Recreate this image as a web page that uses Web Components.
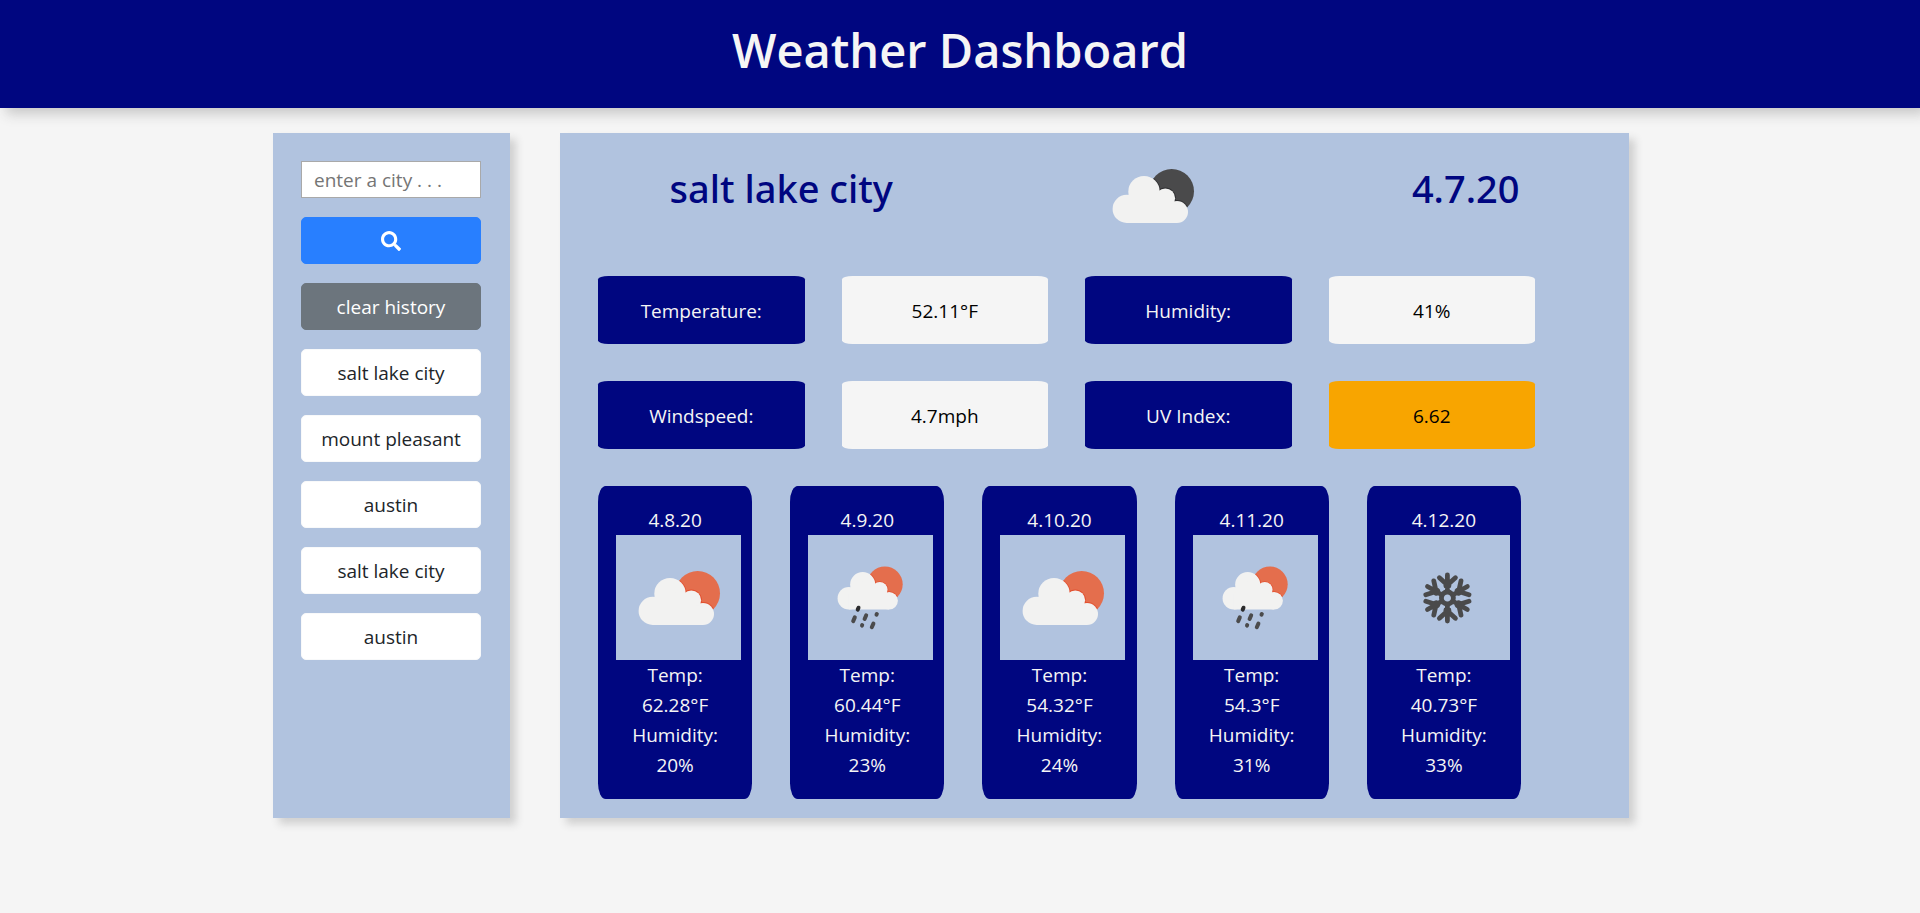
<!DOCTYPE html>
<html lang="en">
<head>
<meta charset="utf-8">
<meta name="viewport" content="width=device-width, initial-scale=1">
<title>Weather Dashboard</title>
<style>
  body {
    margin: 0;
    background: #f5f5f5;
    color: #000;
    font: 19px/30px "Open Sans", "Noto Sans", sans-serif;
  }
</style>
</head>
<body>
<weather-app></weather-app>

<script>
const define = (name, html, setup) => {
  const template = document.createElement('template');
  template.innerHTML = html;
  customElements.define(name, class extends HTMLElement {
    constructor() {
      super();
      this.attachShadow({ mode: 'open' }).append(template.content.cloneNode(true));
    }
    connectedCallback() {
      if (setup) setup(this, this.shadowRoot);
    }
  });
};

const cloud = (skyColor, rimColor) => `
  <clipPath id="disc"><circle cx="81.7" cy="58.3" r="22.3"/></clipPath>
  <circle cx="81.7" cy="58.3" r="22.3" fill="${skyColor}"/>
  <g clip-path="url(#disc)" fill="${rimColor}">
    <circle cx="54" cy="58.7" r="16.6"/><circle cx="75.3" cy="65.3" r="10.7"/><circle cx="87" cy="79" r="11.9"/>
  </g>
  <g fill="#f2f2f1">
    <circle cx="36.7" cy="75.9" r="14.1"/><circle cx="54" cy="58.7" r="15.7"/>
    <circle cx="75.3" cy="65.3" r="9.8"/><circle cx="87" cy="79" r="11"/>
    <path d="M36.700 90V70L54 55 72 62 80 70 87 72V90Z"/>
  </g>`;

const arm = '<path d="M0-7V-23M-8-20.3 0-13 8-20.3M-1.5-12V-16L0-14 1.5-16V-12"/>';
const pictures = {
  night: cloud('#4a4a4b', '#303032'),
  day: cloud('#e46e4d', '#e2502f'),
  rain: `<g transform="translate(11.5 2.6) scale(.8)">${cloud('#e46e4d', '#e2502f')}</g>
    <g stroke="#4b4b4c" stroke-width="4" stroke-linecap="round">
      <path stroke="#2b2b2c" d="M49.7 74.6 50.5 72.7"/>
      <path d="M45.2 86.1 46.8 82.4M56.6 84 58.2 80.3M68.500 79.600 68.800 79M54 90.600 54.200 90.100M63.800 92.200 65.400 88.600"/>
    </g>`,
  snow: `<g transform="translate(62.4 63)" fill="none" stroke="#4a4a4b" stroke-width="4.8" stroke-linecap="round" stroke-linejoin="round">
      <circle r="6"/>
      ${[0, 60, 120, 180, 240, 300].map(a => `<g transform="rotate(${a})">${arm}</g>`).join('')}
    </g>`
};

define('weather-icon', `
  <style>
    :host { display: block; flex: none; width: 125px; height: 125px; }
    svg { display: block; width: 100%; height: 100%; }
  </style>
  <svg viewBox="0 0 125 125" role="img"></svg>`,
  (host, root) => {
    const svg = root.querySelector('svg');
    svg.setAttribute('aria-label', host.getAttribute('kind'));
    svg.innerHTML = pictures[host.getAttribute('kind')] || '';
  });

define('page-header', `
  <style>
    :host { display: block; background: #000680; color: #f5f5f5; box-shadow: 6px 6px 12px #c8c8c8; }
    h1 { margin: 0; padding: 20px 0 28px; font-size: 47px; line-height: 60px; font-weight: 600; text-align: center; }
  </style>
  <header><h1><slot></slot></h1></header>`);

define('city-button', `
  <style>
    :host { display: block; }
    button {
      display: flex; align-items: center; justify-content: center;
      width: 100%; height: 47px; padding: 0; border: 1px solid #f8f9fa; border-radius: 5px;
      background: #fff; color: #212529; font: inherit; cursor: pointer; white-space: nowrap;
    }
    :host([look="primary"]) button { background: #287fff; border-color: #287fff; color: #fff; }
    :host([look="muted"]) button { background: #6c757d; border-color: #6c757d; color: #fff; }
  </style>
  <button type="button"><slot></slot></button>`,
  (host, root) => {
    if (host.title) root.querySelector('button').setAttribute('aria-label', host.title);
  });

define('search-panel', `
  <style>
    :host { display: block; background: #b1c3df; box-shadow: 6px 6px 8px #d0d0d0; }
    form { display: grid; gap: 19px; padding: 28px 29px 28px 28px; }
    input {
      box-sizing: border-box; width: 100%; height: 37px; padding: 0 12px;
      border: 1px solid #a9a9a9; border-radius: 0; background: #fff; color: #212529; font: inherit;
    }
    input::placeholder { color: #757575; opacity: 1; }
    svg { display: block; width: 20px; height: 20px; }
  </style>
  <aside><form>
    <input type="text" placeholder="enter a city . . ." aria-label="City">
    <city-button look="primary" title="Search">
      <svg viewBox="0 0 512 512" aria-hidden="true"><path fill="currentColor" d="M505 442.7L405.300 343c-4.500-4.500-10.600-7-17-7H372c27.600-35.300 44-79.700 44-128C416 93.100 322.900 0 208 0S0 93.100 0 208s93.100 208 208 208c48.300 0 92.700-16.400 128-44v16.300c0 6.400 2.500 12.500 7 17l99.700 99.700c9.400 9.400 24.600 9.400 33.900 0l28.300-28.300c9.400-9.400 9.400-24.600.1-34zM208 336c-70.700 0-128-57.200-128-128 0-70.700 57.200-128 128-128 70.700 0 128 57.200 128 128 0 70.700-57.200 128-128 128z"/></svg>
    </city-button>
    <city-button look="muted">clear history</city-button>
    <city-button>salt lake city</city-button>
    <city-button>mount pleasant</city-button>
    <city-button>austin</city-button>
    <city-button>salt lake city</city-button>
    <city-button>austin</city-button>
  </form></aside>`);

define('metric-tile', `
  <style>
    :host { display: block; padding: 20px 0 18px; border-radius: 5%; background: #f5f5f5; color: #000; text-align: center; }
    :host([look="label"]) { background: #000680; color: #f5f5f5; }
    :host([look="moderate"]) { background: #f8a500; }
  </style>
  <slot></slot>`);

define('forecast-card', `
  <style>
    :host { display: block; padding: 19px 18px; border-radius: 5%; background: #000680; color: #f5f5f5; text-align: center; }
    p { margin: 0; }
    weather-icon { background: #b1c3df; }
  </style>
  <article>
    <p class="date"></p>
    <weather-icon></weather-icon>
    <p>Temp:<br><span class="temp"></span></p>
    <p>Humidity:<br><span class="humidity"></span></p>
  </article>`,
  (host, root) => {
    root.querySelector('.date').textContent = host.getAttribute('date');
    root.querySelector('.temp').textContent = host.getAttribute('temp');
    root.querySelector('.humidity').textContent = host.getAttribute('humidity');
    const icon = document.createElement('weather-icon');
    icon.setAttribute('kind', host.getAttribute('kind'));
    root.querySelector('weather-icon').replaceWith(icon);
  });

define('weather-report', `
  <style>
    :host { display: block; background: #b1c3df; box-shadow: 6px 6px 8px #d0d0d0; }
    .current { display: flex; justify-content: space-around; padding: 0 11px; color: #000680; }
    h2 { margin: 0; padding-top: 31px; font: 500 38px/48px "Noto Sans", "Open Sans", sans-serif; }
    .metrics { display: grid; grid-template-columns: repeat(4, 1fr); gap: 37px; padding: 18px 94px 37px 38px; }
    .forecast { display: grid; grid-template-columns: repeat(5, minmax(0, 1fr)); gap: 38px; padding: 0 108px 19px 38px; }
  </style>
  <main>
    <section class="current">
      <h2>salt lake city</h2>
      <weather-icon kind="night"></weather-icon>
      <h2>4.7.20</h2>
    </section>
    <section class="metrics">
      <metric-tile look="label">Temperature:</metric-tile>
      <metric-tile>52.11°F</metric-tile>
      <metric-tile look="label">Humidity:</metric-tile>
      <metric-tile>41%</metric-tile>
      <metric-tile look="label">Windspeed:</metric-tile>
      <metric-tile>4.7mph</metric-tile>
      <metric-tile look="label">UV Index:</metric-tile>
      <metric-tile look="moderate">6.62</metric-tile>
    </section>
    <section class="forecast">
      <forecast-card date="4.8.20" kind="day" temp="62.28°F" humidity="20%"></forecast-card>
      <forecast-card date="4.9.20" kind="rain" temp="60.44°F" humidity="23%"></forecast-card>
      <forecast-card date="4.10.20" kind="day" temp="54.32°F" humidity="24%"></forecast-card>
      <forecast-card date="4.11.20" kind="rain" temp="54.3°F" humidity="31%"></forecast-card>
      <forecast-card date="4.12.20" kind="snow" temp="40.73°F" humidity="33%"></forecast-card>
    </section>
  </main>`);

define('weather-app', `
  <style>
    :host { display: block; }
    .layout {
      display: grid; grid-template-columns: 237px minmax(0, 1fr); gap: 50px;
      box-sizing: border-box; max-width: 1424px; margin: 0 auto; padding: 25px 43px 25px 25px;
    }
  </style>
  <page-header>Weather Dashboard</page-header>
  <div class="layout">
    <search-panel></search-panel>
    <weather-report></weather-report>
  </div>`);
</script>
</body>
</html>
